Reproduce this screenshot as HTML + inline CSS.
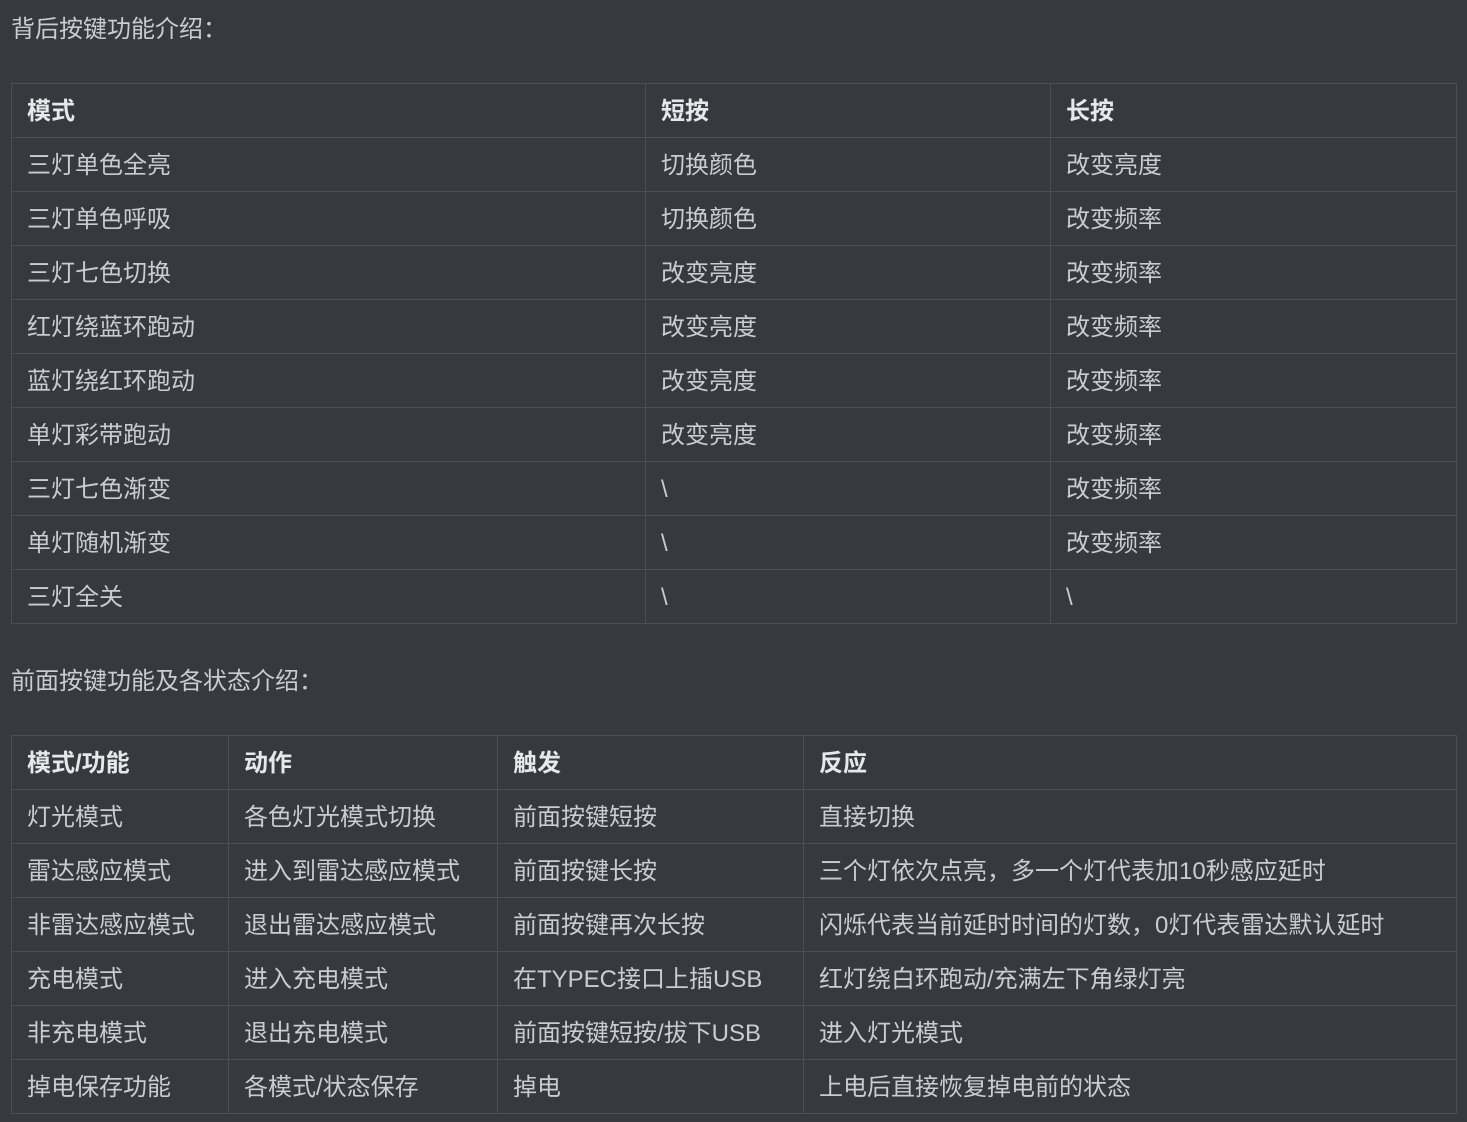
<!DOCTYPE html><html><head><meta charset="utf-8"><style>
body{margin:0;background:#363a3f;color:#c9cdd1;font-family:"Liberation Sans","Noto Sans CJK SC",sans-serif;font-size:24px;width:1467px;height:1122px;overflow:hidden;position:relative}
p{position:absolute;left:11px;margin:0;line-height:30px}
table{position:absolute;left:11px;border-collapse:collapse;width:1446px;table-layout:fixed}
td,th{border:1px solid #4b4f55;height:51px;padding:2px 0 0 15px;text-align:left;line-height:24px;white-space:nowrap}
th{font-weight:bold;color:#e6e8ea}
</style></head><body>
<p style="top:15px">背后按键功能介绍：</p>
<table style="top:83px"><colgroup><col style="width:634px"><col style="width:405px"><col></colgroup>
<tr><th>模式</th><th>短按</th><th>长按</th></tr>
<tr><td>三灯单色全亮</td><td>切换颜色</td><td>改变亮度</td></tr>
<tr><td>三灯单色呼吸</td><td>切换颜色</td><td>改变频率</td></tr>
<tr><td>三灯七色切换</td><td>改变亮度</td><td>改变频率</td></tr>
<tr><td>红灯绕蓝环跑动</td><td>改变亮度</td><td>改变频率</td></tr>
<tr><td>蓝灯绕红环跑动</td><td>改变亮度</td><td>改变频率</td></tr>
<tr><td>单灯彩带跑动</td><td>改变亮度</td><td>改变频率</td></tr>
<tr><td>三灯七色渐变</td><td>\</td><td>改变频率</td></tr>
<tr><td>单灯随机渐变</td><td>\</td><td>改变频率</td></tr>
<tr><td>三灯全关</td><td>\</td><td>\</td></tr>
</table>
<p style="top:667px">前面按键功能及各状态介绍：</p>
<table style="top:735px"><colgroup><col style="width:217px"><col style="width:269px"><col style="width:306px"><col></colgroup>
<tr><th>模式/功能</th><th>动作</th><th>触发</th><th>反应</th></tr>
<tr><td>灯光模式</td><td>各色灯光模式切换</td><td>前面按键短按</td><td>直接切换</td></tr>
<tr><td>雷达感应模式</td><td>进入到雷达感应模式</td><td>前面按键长按</td><td>三个灯依次点亮，多一个灯代表加10秒感应延时</td></tr>
<tr><td>非雷达感应模式</td><td>退出雷达感应模式</td><td>前面按键再次长按</td><td>闪烁代表当前延时时间的灯数，0灯代表雷达默认延时</td></tr>
<tr><td>充电模式</td><td>进入充电模式</td><td>在TYPEC接口上插USB</td><td>红灯绕白环跑动/充满左下角绿灯亮</td></tr>
<tr><td>非充电模式</td><td>退出充电模式</td><td>前面按键短按/拔下USB</td><td>进入灯光模式</td></tr>
<tr><td>掉电保存功能</td><td>各模式/状态保存</td><td>掉电</td><td>上电后直接恢复掉电前的状态</td></tr>
</table>
</body></html>
